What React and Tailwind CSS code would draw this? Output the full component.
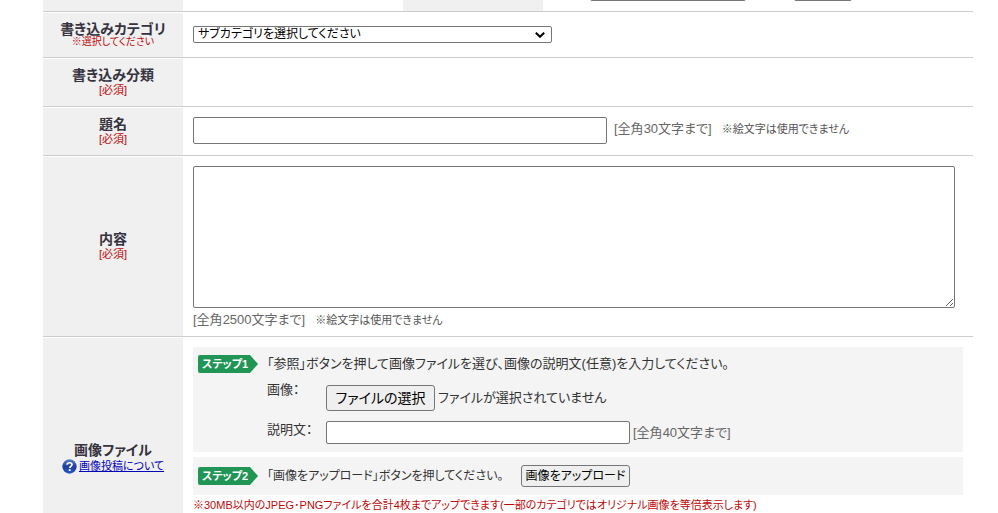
import { useState } from "react";

const TEXT_BOX = "border border-[#767676] rounded-[2px] bg-white px-1 text-[13px] text-black";

function Row({ head, className, children }) {
  return (
    <div className={`flex border-b border-[#cccccc] ${className}`}>
      <div className="w-[140px] shrink-0 bg-[#f0f0f0] flex flex-col items-center text-center">
        {head}
      </div>
      <div className="flex-1 min-w-0 px-[10px]">{children}</div>
    </div>
  );
}

function Title({ htmlFor, children }) {
  return (
    <label htmlFor={htmlFor} className="text-[14px] leading-[15px] font-bold text-[#37333e]">
      {children}
    </label>
  );
}

function Required() {
  return <span className="text-[11px] leading-[14px] text-[#c00808]">[必須]</span>;
}

function Limit({ max }) {
  return <span className="text-[13px] leading-4 text-[#666666]">[全角{max}文字まで]</span>;
}

function NoEmoji() {
  return <span className="text-[11px] leading-4 text-[#555555]">※絵文字は使用できません</span>;
}

function StepBadge({ step }) {
  return (
    <span className="relative w-[60px] h-[18px] shrink-0 flex items-center">
      <svg viewBox="0 0 60 18" className="absolute inset-0 w-full h-full" aria-hidden="true">
        <path d="M2 0H52L60 9L52 18H2Q0 18 0 16V2Q0 0 2 0Z" fill="#219556" />
      </svg>
      <span className="relative pl-1 text-[11px] leading-[18px] font-bold text-white whitespace-nowrap">
        ステップ{step}
      </span>
    </span>
  );
}

function HelpIcon() {
  return (
    <svg viewBox="0 0 14 14" className="w-[15px] h-[15px] shrink-0" aria-hidden="true">
      <defs>
        <linearGradient id="help" x1="0" y1="0" x2="0" y2="1">
          <stop offset="0" stopColor="#5d7fc4" />
          <stop offset="0.5" stopColor="#1f3f9c" />
          <stop offset="1" stopColor="#2a55c0" />
        </linearGradient>
      </defs>
      <circle cx="7" cy="7" r="6.7" fill="url(#help)" />
      <path
        d="M4.8 5.4Q4.9 3.5 7.1 3.5Q9.3 3.5 9.3 5.2Q9.3 6.3 8.1 7Q7.2 7.5 7.2 8.5"
        fill="none"
        stroke="#fff"
        strokeWidth="1.6"
      />
      <rect x="6.3" y="9.5" width="1.8" height="1.7" fill="#fff" />
    </svg>
  );
}

export default function App() {
  const [title, setTitle] = useState("");
  const [body, setBody] = useState("");
  const [caption, setCaption] = useState("");
  const [fileName, setFileName] = useState("");

  return (
    <form
      onSubmit={(e) => e.preventDefault()}
      className="min-h-screen flex flex-col gap-px bg-white pl-[43px] pr-[25px] text-[#333333] font-['Liberation_Sans','Noto_Sans_CJK_JP',sans-serif] [font-feature-settings:'palt']"
    >
      {/* end of the user info row */}
      <div className="flex h-3 overflow-hidden border-b border-[#cccccc]">
        <div className="w-[140px] shrink-0 bg-[#f0f0f0]" />
        <div className="w-[220px] shrink-0" />
        <div className="w-[140px] shrink-0 bg-[#f0f0f0]" />
        <div className="flex items-end gap-12 pl-[47px] pb-[10px]">
          <input aria-label="メールアドレス" className={`${TEXT_BOX} h-5 w-[156px] shrink-0`} />
          <input aria-label="パスワード" className={`${TEXT_BOX} h-5 w-[58px] shrink-0`} />
        </div>
      </div>

      {/* category */}
      <Row
        className="h-[45px]"
        head={
          <div className="flex flex-col pt-[9px]">
            <Title htmlFor="category">書き込みカテゴリ</Title>
            <span className="text-[10px] leading-[10px] text-[#c00808]">※選択してください</span>
          </div>
        }
      >
        <div className="pt-[13px] flex">
          <div className="relative">
            <select
              id="category"
              className="appearance-none block h-[17px] w-[359px] pl-1 pr-5 border border-[#767676] rounded-[2px] bg-white text-[12px] leading-[15px] text-black"
            >
              <option>サブカテゴリを選択してください</option>
            </select>
            <svg
              viewBox="0 0 10 6"
              className="absolute right-[7px] top-[6px] w-[10px] h-[6px] pointer-events-none"
              aria-hidden="true"
            >
              <path d="M0.8 0.8L5 4.8L9.2 0.8" fill="none" stroke="#000" strokeWidth="2" />
            </svg>
          </div>
        </div>
      </Row>

      {/* type */}
      <Row
        className="h-12"
        head={
          <div className="flex flex-col pt-[9px]">
            <span className="text-[14px] leading-[15px] font-bold text-[#37333e]">書き込み分類</span>
            <Required />
          </div>
        }
      />

      {/* title */}
      <Row
        className="h-12"
        head={
          <div className="flex flex-col pt-[9px]">
            <Title htmlFor="title">題名</Title>
            <Required />
          </div>
        }
      >
        <div className="flex items-center pt-[9px]">
          <input
            id="title"
            value={title}
            onChange={(e) => setTitle(e.target.value)}
            className={`${TEXT_BOX} h-[27px] w-[414px] mr-[7px]`}
          />
          <div className="flex items-center gap-[10px] pb-1">
            <Limit max={30} />
            <NoEmoji />
          </div>
        </div>
      </Row>

      {/* body */}
      <Row
        className=""
        head={
          <div className="flex flex-col my-auto">
            <Title htmlFor="body">内容</Title>
            <Required />
          </div>
        }
      >
        <div className="pt-[9px] pb-2">
          <textarea
            id="body"
            value={body}
            onChange={(e) => setBody(e.target.value)}
            className="block w-full max-w-[762px] h-[142px] border border-[#767676] rounded-[2px] bg-white p-1 text-[13px]"
          />
          <div className="flex items-center gap-[10px] pt-1">
            <Limit max={2500} />
            <NoEmoji />
          </div>
        </div>
      </Row>

      {/* image file */}
      <div className="flex flex-1">
        <div className="w-[140px] shrink-0 bg-[#f0f0f0] flex flex-col items-center pt-[105px]">
          <Title htmlFor="file">画像ファイル</Title>
          <a href="#help" className="flex items-center gap-[2px] text-[11px] leading-4 text-[#0000bb]">
            <HelpIcon />
            <span className="underline">画像投稿について</span>
          </a>
        </div>

        <div className="flex-1 min-w-0 px-[10px] pt-[9px] text-[13px]">
          <div className="flex gap-[9px] bg-[#f4f4f4] pl-[5px] pt-2 pb-2">
            <StepBadge step={1} />
            <div className="flex-1">
              <p className="leading-[18px]">
                「参照」ボタンを押して画像ファイルを選び、画像の説明文(任意)を入力してください。
              </p>
              <div className="flex pt-3">
                <label htmlFor="file" className="w-[59px] leading-[10px]">画像：</label>
                <input
                  id="file"
                  type="file"
                  className="sr-only"
                  onChange={(e) => setFileName(e.target.files[0]?.name || "")}
                />
                <button
                  type="button"
                  onClick={() => document.getElementById("file").click()}
                  className="h-[26px] w-[109px] border border-[#767676] rounded-[3px] bg-[#efefef] text-[14px] text-black whitespace-nowrap"
                >
                  ファイルの選択
                </button>
                <span className="pl-[3px] leading-[26px]">
                  {fileName || "ファイルが選択されていません"}
                </span>
              </div>
              <div className="flex pt-[10px]">
                <label htmlFor="caption" className="w-[59px] leading-[18px]">説明文：</label>
                <input
                  id="caption"
                  value={caption}
                  onChange={(e) => setCaption(e.target.value)}
                  className={`${TEXT_BOX} h-[23px] w-[304px] mr-[3px]`}
                />
                <div className="flex items-center">
                  <Limit max={40} />
                </div>
              </div>
            </div>
          </div>

          <div className="mt-[5px] flex items-center bg-[#f4f4f4] h-[38px] pl-[5px]">
            <StepBadge step={2} />
            <p className="w-[263px] pl-[9px] text-[12px] leading-[18px] whitespace-nowrap">
              「画像をアップロード」ボタンを押してください。
            </p>
            <button
              type="button"
              className="h-[22px] w-[109px] border border-[#767676] rounded-[3px] bg-[#efefef] text-[12px] text-black whitespace-nowrap"
            >
              画像をアップロード
            </button>
          </div>

          <p className="pt-[2px] text-[11px] leading-4 text-[#c00808] whitespace-nowrap">
            ※30MB以内のJPEG･PNGファイルを合計4枚までアップできます(一部のカテゴリではオリジナル画像を等倍表示します)
          </p>
        </div>
      </div>
    </form>
  );
}
